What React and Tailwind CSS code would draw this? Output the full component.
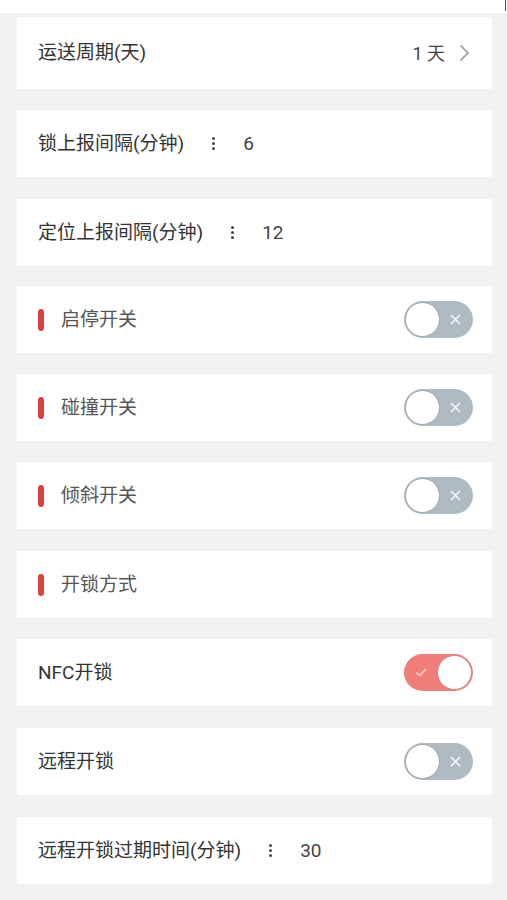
import React from 'react';

const font = { fontFamily: 'Roboto, "Noto Sans CJK SC", "Noto Sans", sans-serif' };

const Dots = () => (
  <div className="flex flex-col items-center gap-[2px] mx-[28px]">
    <span className="w-[3px] h-[3px] rounded-full bg-[#444]" />
    <span className="w-[3px] h-[3px] rounded-full bg-[#444]" />
    <span className="w-[3px] h-[3px] rounded-full bg-[#444]" />
  </div>
);

const Toggle = ({ on }) =>
  on ? (
    <div className="relative w-[69px] h-[37px] rounded-full bg-[#ee7e77] flex items-center">
      <svg className="absolute left-[11px] top-[14px]" width="12" height="9" viewBox="0 0 12 9">
        <path d="M1 4.5 L4.5 7.5 L11 1" fill="none" stroke="#fbd6d3" strokeWidth="1.4" />
      </svg>
      <div className="absolute right-[1px] top-[1px] w-[35px] h-[35px] rounded-full bg-white border-[1.5px] border-[#c98584]" />
    </div>
  ) : (
    <div className="relative w-[69px] h-[37px] rounded-full bg-[#aebbc3] flex items-center">
      <div className="absolute left-[1px] top-[1px] w-[35px] h-[35px] rounded-full bg-white border-[1.5px] border-[#9ea4a8]" />
      <svg className="absolute left-[46px] top-[13px]" width="11" height="11" viewBox="0 0 11 11">
        <path d="M1 1 L10 10 M10 1 L1 10" fill="none" stroke="#ffffff" strokeWidth="1.4" />
      </svg>
    </div>
  );

const Card = ({ children, tall, gap = 'mt-[21px]' }) => (
  <div className={`bg-white flex items-center pl-[21px] pr-[19px] ${gap} ${tall ? 'h-[72px]' : 'h-[67px]'}`}>
    {children}
  </div>
);

const Bar = () => <span className="w-[6px] h-[22px] rounded-full bg-[#d8453e] mr-[17px]" />;

const Label = ({ children, light }) => (
  <span className={`text-[19px] pt-[2px] ${light ? 'text-[#555]' : 'text-[#333]'}`}>{children}</span>
);

const ValueRow = ({ label, value, gap }) => (
  <Card gap={gap}>
    <Label>{label}</Label>
    <Dots />
    <span className="text-[19px] pt-[2px] text-[#444]">{value}</span>
  </Card>
);

const SwitchRow = ({ label, on, bar, gap }) => (
  <Card gap={gap}>
    {bar && <Bar />}
    <Label light={bar}>{label}</Label>
    <div className="ml-auto">
      <Toggle on={on} />
    </div>
  </Card>
);

export default function App() {
  return (
    <div className="min-h-screen bg-[#f2f2f2]" style={font}>
      <div className="h-[13px] bg-white relative">
        <span className="absolute right-[1px] top-0 w-[1px] h-[11px] bg-[#555]" />
      </div>
      <div className="pl-[17px] pr-[15px] pt-[4px] flex flex-col pb-4">
        <Card tall gap="mt-0">
          <span className="text-[19px] text-[#333]">运送周期(天)</span>
          <span className="ml-auto text-[18px] text-[#444]">1 天</span>
          <svg className="ml-[14px] mr-[3px]" width="11" height="18" viewBox="0 0 11 18">
            <path d="M1.5 1.5 L9 9 L1.5 16.5" fill="none" stroke="#999" strokeWidth="1.6" />
          </svg>
        </Card>
        <ValueRow label="锁上报间隔(分钟)" value="6" gap="mt-[21px]" />
        <ValueRow label="定位上报间隔(分钟)" value="12" gap="mt-[22px]" />
        <SwitchRow label="启停开关" bar gap="mt-[20px]" />
        <SwitchRow label="碰撞开关" bar gap="mt-[21px]" />
        <SwitchRow label="倾斜开关" bar gap="mt-[21px]" />
        <Card gap="mt-[22px]">
          <Bar />
          <Label light>开锁方式</Label>
        </Card>
        <SwitchRow label="NFC开锁" on gap="mt-[21px]" />
        <SwitchRow label="远程开锁" gap="mt-[22px]" />
        <ValueRow label="远程开锁过期时间(分钟)" value="30" gap="mt-[22px]" />
      </div>
    </div>
  );
}
